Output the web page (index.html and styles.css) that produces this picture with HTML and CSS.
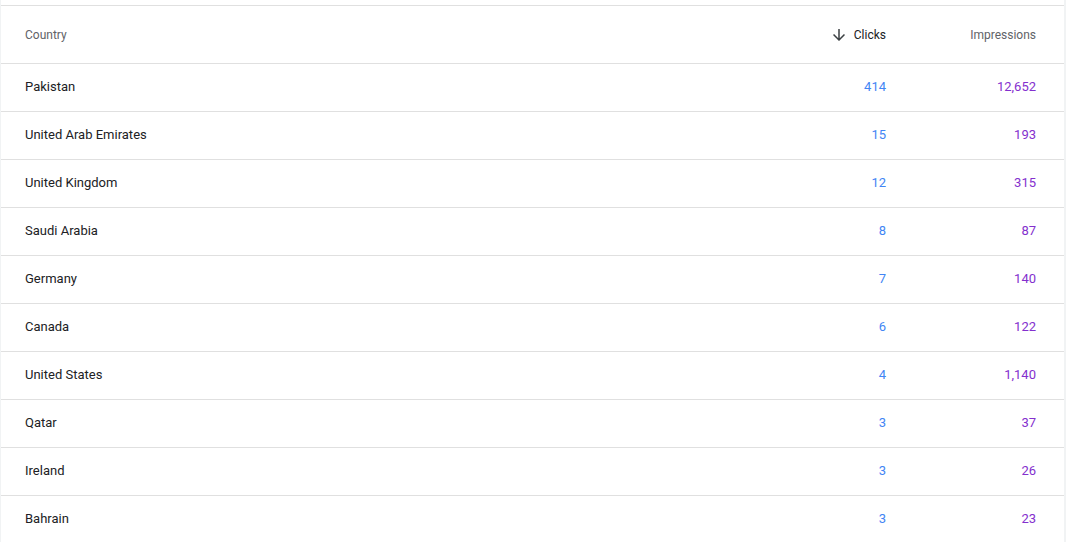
FILE: index.html
```html
<!DOCTYPE html>
<html>
<head>
<meta charset="utf-8">
<link rel="stylesheet" href="styles.css">
</head>
<body>
<div class="page">
  <div class="card">
    <div class="top"></div>
    <div class="row head">
      <div class="cell name">Country</div>
      <div class="cell num sorted">
        <svg class="arrow" viewBox="0 0 24 24" width="18" height="18"><path d="M20 12l-1.41-1.41L13 16.17V4h-2v12.17l-5.58-5.59L4 12l8 8 8-8z" fill="#3c4043"/></svg>
        <span>Clicks</span>
      </div>
      <div class="cell num">Impressions</div>
    </div>
    <div class="row"><div class="cell name">Pakistan</div><div class="cell num clicks">414</div><div class="cell num imps">12,652</div></div>
    <div class="row"><div class="cell name">United Arab Emirates</div><div class="cell num clicks">15</div><div class="cell num imps">193</div></div>
    <div class="row"><div class="cell name">United Kingdom</div><div class="cell num clicks">12</div><div class="cell num imps">315</div></div>
    <div class="row"><div class="cell name">Saudi Arabia</div><div class="cell num clicks">8</div><div class="cell num imps">87</div></div>
    <div class="row"><div class="cell name">Germany</div><div class="cell num clicks">7</div><div class="cell num imps">140</div></div>
    <div class="row"><div class="cell name">Canada</div><div class="cell num clicks">6</div><div class="cell num imps">122</div></div>
    <div class="row"><div class="cell name">United States</div><div class="cell num clicks">4</div><div class="cell num imps">1,140</div></div>
    <div class="row"><div class="cell name">Qatar</div><div class="cell num clicks">3</div><div class="cell num imps">37</div></div>
    <div class="row"><div class="cell name">Ireland</div><div class="cell num clicks">3</div><div class="cell num imps">26</div></div>
    <div class="row"><div class="cell name">Bahrain</div><div class="cell num clicks">3</div><div class="cell num imps">23</div></div>
  </div>
</div>
</body>
</html>
```
FILE: styles.css
```css
html, body {
  margin: 0;
  padding: 0;
  background: #f1f3f4;
  font-family: Roboto, "Liberation Sans", sans-serif;
}
.page {
  padding: 0 2px 0 1px;
  height: 542px;
  overflow: hidden;
}
.card {
  background: #ffffff;
  width: 1063px;
}
.top {
  height: 5px;
  border-bottom: 1px solid #e0e0e0;
}
.row {
  display: grid;
  grid-template-columns: 1fr 150px 150px;
  align-items: center;
  height: 45px;
  padding: 0 28px 2px 24px;
  border-bottom: 1px solid #e0e0e0;
  font-size: 13px;
  color: #202124;
}
.row.head {
  height: 57px;
  padding-bottom: 0;
  font-size: 12px;
  color: #5f6368;
}
.cell.num {
  text-align: right;
}
.sorted {
  display: flex;
  justify-content: flex-end;
  align-items: center;
  gap: 6px;
  color: #202124;
}
.arrow {
  display: block;
}
.clicks {
  color: #4285f4;
}
.imps {
  color: #8430ce;
}
```
